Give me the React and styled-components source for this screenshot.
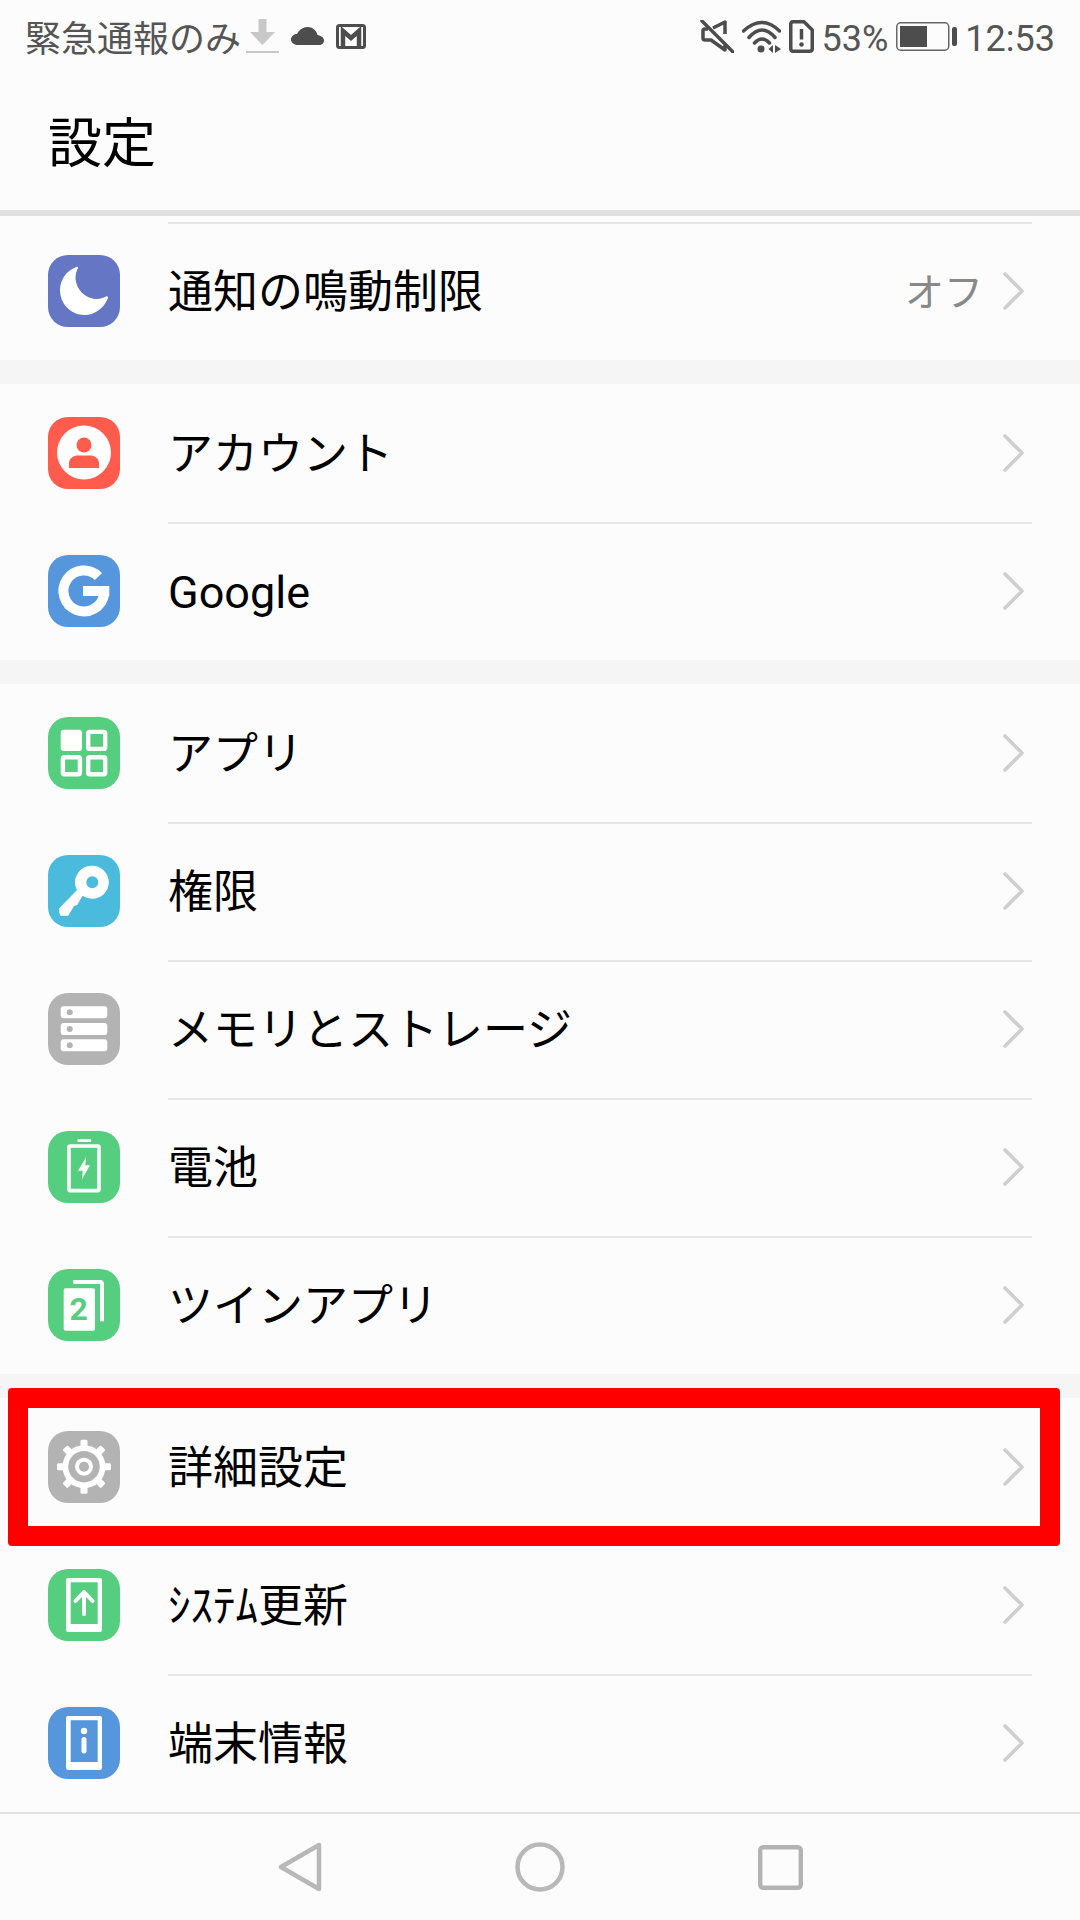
import React from 'react';
import styled, { createGlobalStyle } from 'styled-components';

const GlobalStyle = createGlobalStyle`
  html, body {
    margin: 0;
    padding: 0;
    background: #fcfcfc;
  }
  * {
    box-sizing: border-box;
  }
`;

const GREEN = '#56ce7f';
const GREY = '#b3b3b3';
const BLUE = '#5596dc';

const Page = styled.div`
  width: 1080px;
  height: 1920px;
  overflow: hidden;
  display: flex;
  flex-direction: column;
  background: #fcfcfc;
  font-family: 'Noto Sans CJK JP', 'Noto Sans', sans-serif;
  color: #000;
`;

const StatusBar = styled.div`
  height: 72px;
  padding: 0 25px;
  display: flex;
  align-items: center;
  justify-content: space-between;
  color: #555;
  font-size: 36px;
`;

const StatusGroup = styled.div`
  display: flex;
  align-items: center;
  gap: ${(p) => p.$gap || 10}px;
`;

const StatusText = styled.span`
  font-family: 'Roboto', 'Noto Sans CJK JP', sans-serif;
  line-height: 40px;
  padding-top: 5px;
  white-space: nowrap;
`;

const NoticeText = styled(StatusText)`
  font-family: 'Noto Sans CJK JP', sans-serif;
  padding-top: 0;
  margin-right: -7px;
`;

const Header = styled.header`
  height: 144px;
  padding: 0 0 2px 48px;
  display: flex;
  align-items: center;
  border-bottom: 6px solid #e1e1e1;
`;

const Title = styled.h1`
  margin: 0;
  font-size: 54px;
  font-weight: 400;
  line-height: 1;
`;

const List = styled.div`
  padding-top: 6px;
  flex: 1;
`;

const Section = styled.section`
  & + & {
    margin-top: 24px;
  }
`;

const Gap = styled.div`
  background: #f5f5f5;
`;

const Row = styled.div`
  position: relative;
  height: 138px;
  padding: 0 56px 0 48px;
  display: flex;
  align-items: center;
  background: #fcfcfc;
  z-index: ${(p) => (p.$highlighted ? 1 : 'auto')};

  &::before {
    content: '';
    display: ${(p) => (p.$divided ? 'block' : 'none')};
    position: absolute;
    top: 0;
    left: 168px;
    right: 48px;
    height: 2px;
    background: #e6e6e6;
  }

  &::after {
    content: '';
    display: ${(p) => (p.$highlighted ? 'block' : 'none')};
    position: absolute;
    top: -10px;
    bottom: -10px;
    left: 8px;
    right: 20px;
    border: 20px solid #ff0000;
    border-radius: 4px;
  }
`;

const IconTile = styled.div`
  width: 72px;
  height: 72px;
  flex: none;
  border-radius: 20px;
  background: ${(p) => p.$color};
  margin-right: 48px;

  svg {
    display: block;
  }
`;

const Label = styled.span`
  flex: 1;
  font-size: 45px;
  line-height: 60px;
  padding-bottom: 5px;
  white-space: nowrap;
`;

const LatinLabel = styled(Label)`
  font-family: 'Roboto', sans-serif;
  font-size: 45px;
  padding-bottom: 0;
  padding-top: 3px;
`;

const Value = styled.span`
  font-size: 39px;
  color: #888;
  margin-right: 20px;
  padding-bottom: 5px;
`;

const NavBar = styled.nav`
  height: 108px;
  padding-left: 278px;
  border-top: 2px solid #e3e3e3;
  display: flex;
  align-items: center;
  gap: 193px;
  background: #fcfcfc;
  position: relative;
  z-index: 2;
`;

const Tile = ({ color, children }) => (
  <IconTile $color={color}>
    <svg width="72" height="72" viewBox="0 0 72 72">
      {children}
    </svg>
  </IconTile>
);

const MoonIcon = () => (
  <Tile color="#6476c4">
    <path
      fill="#fff"
      d="M28.5 12C19 15 12 24.5 12 35C12 49 23 60 36.5 60C47 60 56 53 60 43C60 41.5 59 41 58 41.5C55 43 52 44 49 44C37 44 28 34 27.5 23C27.5 19 28.5 16 30 13C30 12 29.5 11.5 28.5 12Z"
    />
  </Tile>
);

const AccountIcon = () => (
  <Tile color="#ff5c4d">
    <circle cx="36" cy="35.5" r="27" fill="#fff" />
    <circle cx="36" cy="28" r="7.5" fill="#ff5c4d" />
    <path fill="#ff5c4d" d="M21 51V46C21 41 26 38.5 30 38.5H42C46 38.5 51 41 51 46V51Z" />
  </Tile>
);

const GoogleIcon = () => (
  <Tile color={BLUE}>
    <path
      fill="none"
      stroke="#fff"
      strokeWidth="10"
      d="M50.5 21.5A20.5 20.5 0 1 0 56.2 39"
    />
    <rect x="35" y="31" width="26.3" height="10" fill="#fff" />
  </Tile>
);

const AppsIcon = () => (
  <Tile color={GREEN}>
    <rect x="12.7" y="12.7" width="21.3" height="21.3" rx="3" fill="#fff" />
    <g fill="none" stroke="#fff" strokeWidth="4.4">
      <rect x="40.2" y="14.9" width="17" height="17" rx="1.5" />
      <rect x="14.9" y="40.2" width="17" height="17" rx="1.5" />
      <rect x="40.2" y="40.2" width="17" height="17" rx="1.5" />
    </g>
  </Tile>
);

const KeyIcon = () => (
  <Tile color="#4abbdc">
    <path
      fill="#fff"
      fillRule="evenodd"
      d="M44.3 10.8a16.5 16.5 0 1 1 0 33a16.5 16.5 0 0 1 -9.6 -3.1L32 45L29.3 50L26 51L24.7 53.3L22.7 56.7L20.3 60.7H12.7L11.3 58V53.3L29 35a16.5 16.5 0 0 1 15.3 -24.2ZM44.3 21.3a6 6 0 1 0 0 12a6 6 0 0 0 0 -12Z"
    />
  </Tile>
);

const MemoryIcon = () => (
  <Tile color={GREY}>
    {[13.3, 30, 46.3].map((y) => (
      <g key={y}>
        <rect x="12.7" y={y} width="46.6" height="12" rx="3" fill="#fff" />
        <circle cx="21.7" cy={y + 6} r="3" fill={GREY} />
      </g>
    ))}
  </Tile>
);

const BatteryIcon = () => (
  <Tile color={GREEN}>
    <rect x="29.3" y="8.3" width="14" height="2.6" rx="1.3" fill="#fff" />
    <rect x="21" y="15" width="30" height="44.6" rx="1" fill="none" stroke="#fff" strokeWidth="3.6" />
    <path fill="#fff" d="M38 26.3L30 39.7H34.7L34 48.3L42 34.3H37.3Z" />
  </Tile>
);

const TwinIcon = () => (
  <Tile color={GREEN}>
    <path fill="none" stroke="#fff" strokeWidth="4" d="M25.3 13H52a2 2 0 0 1 2 2V52.3" />
    <rect x="15.7" y="19.3" width="31.3" height="42.4" rx="2" fill="#fff" />
    <text
      x="30.7"
      y="51"
      fill={GREEN}
      fontFamily="Roboto, sans-serif"
      fontWeight="700"
      fontSize="32"
      textAnchor="middle"
    >
      2
    </text>
  </Tile>
);

const GearIcon = () => (
  <Tile color={GREY}>
    <g transform="translate(36 35.7)">
      {[0, 45, 90, 135, 180, 225, 270, 315].map((deg) => (
        <rect
          key={deg}
          x="-3.5"
          y="-27"
          width="7"
          height="10"
          rx="1.5"
          fill="#fff"
          transform={`rotate(${deg})`}
        />
      ))}
      <circle r="21.5" fill="#fff" />
      <circle r="15.7" fill={GREY} />
      <circle r="9" fill="#fff" />
      <circle r="5" fill={GREY} />
    </g>
  </Tile>
);

const PhoneFrame = ({ color, children }) => (
  <Tile color={color}>
    <path
      fill="#fff"
      fillRule="evenodd"
      d="M20 9H52a2 2 0 0 1 2 2V61a2 2 0 0 1 -2 2H20a2 2 0 0 1 -2 -2V11a2 2 0 0 1 2 -2ZM22.7 13.3V55H49.7V13.3Z"
    />
    {children}
  </Tile>
);

const UpdateIcon = () => (
  <PhoneFrame color={GREEN}>
    <path
      fill="none"
      stroke="#fff"
      strokeWidth="4"
      strokeLinecap="round"
      strokeLinejoin="round"
      d="M36 45V23M27.5 32L36 23L44.5 32"
    />
  </PhoneFrame>
);

const InfoIcon = () => (
  <PhoneFrame color={BLUE}>
    <circle cx="36" cy="24" r="3.2" fill="#fff" />
    <path fill="none" stroke="#fff" strokeWidth="5" strokeLinecap="round" d="M36 32.5V44" />
  </PhoneFrame>
);

const Chevron = () => (
  <svg width="21" height="38" viewBox="0 0 21 38">
    <path
      fill="none"
      stroke="#cfcfcf"
      strokeWidth="3.6"
      strokeLinecap="round"
      strokeLinejoin="round"
      d="M2 2L19 19L2 36"
    />
  </svg>
);

const sections = [
  [{ icon: MoonIcon, label: '通知の鳴動制限', value: 'オフ', divided: true }],
  [
    { icon: AccountIcon, label: 'アカウント' },
    { icon: GoogleIcon, label: 'Google', latin: true, divided: true },
  ],
  [
    { icon: AppsIcon, label: 'アプリ' },
    { icon: KeyIcon, label: '権限', divided: true },
    { icon: MemoryIcon, label: 'メモリとストレージ', divided: true },
    { icon: BatteryIcon, label: '電池', divided: true },
    { icon: TwinIcon, label: 'ツインアプリ', divided: true },
  ],
  [
    { icon: GearIcon, label: '詳細設定', highlighted: true },
    { icon: UpdateIcon, label: 'ｼｽﾃﾑ更新' },
    { icon: InfoIcon, label: '端末情報', divided: true },
  ],
];

const SettingsRow = ({ icon: Icon, label, value, latin, divided, highlighted }) => {
  const Text = latin ? LatinLabel : Label;
  return (
    <Row $divided={divided} $highlighted={highlighted}>
      <Icon />
      <Text>{label}</Text>
      {value && <Value>{value}</Value>}
      <Chevron />
    </Row>
  );
};

const App = () => (
  <Page>
    <GlobalStyle />
    <StatusBar>
      <StatusGroup $gap={12}>
        <NoticeText>緊急通報のみ</NoticeText>
        <svg width="33" height="34" viewBox="0 0 33 34">
          <path fill="#c8c8c8" d="M12.5 0H20.5V13H29L16.5 26L4 13H12.5Z" />
          <rect y="32" width="33" height="2" fill="#c8c8c8" />
        </svg>
        <svg width="33" height="18" viewBox="0 0 33 18">
          <path
            fill="#4d4d4d"
            d="M7 18C3 18 0 15.5 0 12.5C0 9.5 2.5 7 6 7C8 3 12 0 16.5 0C21.5 0 25.5 3.5 26.5 8C30 8.5 33 10.5 33 13.5C33 16 31 18 28 18Z"
          />
        </svg>
        <svg width="30" height="25" viewBox="0 0 30 25">
          <rect x="1.5" y="1.5" width="27" height="22" rx="2" fill="#fff" stroke="#4d4d4d" strokeWidth="3" />
          <path fill="none" stroke="#4d4d4d" strokeWidth="4.5" d="M7 22V7L15 14L23 7V22" />
        </svg>
      </StatusGroup>
      <StatusGroup $gap={8}>
        <svg width="34" height="33" viewBox="0 0 34 33">
          <g fill="none" stroke="#4d4d4d" strokeWidth="3.5" strokeLinejoin="round">
            <path d="M13 8L25 2V14" />
            <path d="M8 9H5a2 2 0 0 0 -2 2V18a2 2 0 0 0 2 2H11L25 30V25" />
            <path strokeLinecap="round" d="M2 1L33 32" />
          </g>
        </svg>
        <svg width="39" height="33" viewBox="0 0 39 33">
          <g fill="none" stroke="#4d4d4d" strokeWidth="3.5" strokeLinecap="round">
            <path d="M1.5 11Q20 -6 37.5 11" />
            <path d="M7 17.5Q20 2.5 33 17.5" />
            <path d="M12.5 23Q20 15 27.5 23" />
          </g>
          <circle cx="19" cy="29" r="3.5" fill="#4d4d4d" />
          <path fill="#4d4d4d" d="M31 25V33L26.5 29ZM33 25L39 29L33 33Z" />
        </svg>
        <svg width="25" height="33" viewBox="0 0 25 33">
          <path
            fill="none"
            stroke="#4d4d4d"
            strokeWidth="3.5"
            strokeLinejoin="round"
            d="M4 1.75H15L23.25 10V29A2.5 2.5 0 0 1 20.75 31.25H4A2.5 2.5 0 0 1 1.75 29V4A2.5 2.5 0 0 1 4 1.75Z"
          />
          <path stroke="#4d4d4d" strokeWidth="3.5" d="M12.5 9V19.5" />
          <circle cx="12.5" cy="24.5" r="2.3" fill="#4d4d4d" />
        </svg>
        <StatusText>53%</StatusText>
        <svg width="61" height="29" viewBox="0 0 61 29">
          <rect x="0.75" y="0.75" width="52" height="27.5" rx="4" fill="none" stroke="#666" strokeWidth="1.5" />
          <rect x="4" y="4" width="27" height="21" fill="#4d4d4d" />
          <rect x="56" y="5" width="5" height="19" rx="2" fill="#4d4d4d" />
        </svg>
        <StatusText>12:53</StatusText>
      </StatusGroup>
    </StatusBar>
    <Header>
      <Title>設定</Title>
    </Header>
    <List>
      <Gap>
        {sections.map((rows) => (
          <Section key={rows[0].label}>
            {rows.map((row) => (
              <SettingsRow key={row.label} {...row} />
            ))}
          </Section>
        ))}
      </Gap>
    </List>
    <NavBar>
      <svg width="44" height="50" viewBox="0 0 44 50">
        <path
          fill="none"
          stroke="#b8b8b8"
          strokeWidth="4.5"
          strokeLinejoin="round"
          d="M41 3V47L3 25Z"
        />
      </svg>
      <svg width="50" height="50" viewBox="0 0 50 50">
        <circle cx="25" cy="25" r="22.5" fill="none" stroke="#b8b8b8" strokeWidth="4.5" />
      </svg>
      <svg width="45" height="45" viewBox="0 0 45 45">
        <rect x="2.2" y="2.2" width="40.6" height="40.6" rx="3" fill="none" stroke="#b3b3b3" strokeWidth="4.4" />
      </svg>
    </NavBar>
  </Page>
);

export default App;
